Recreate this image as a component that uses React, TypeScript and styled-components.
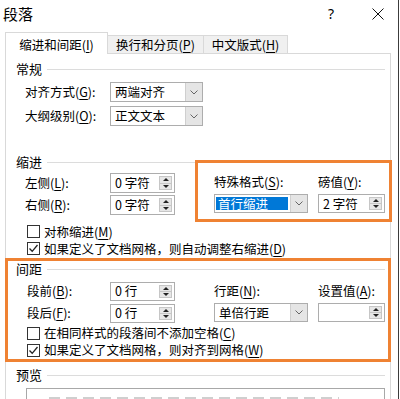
import React from "react";
import styled, { createGlobalStyle } from "styled-components";

const Global = createGlobalStyle`
  html, body { margin: 0; padding: 0; background: #fff; }
  body {
    font-family: "Noto Sans CJK SC", "Noto Sans", sans-serif;
    font-size: 12.5px;
    color: #000;
  }
  * { box-sizing: border-box; }
`;

const ORANGE = "#ef8233";
const FS = "12.5px";

const Window = styled.div`
  width: 399px;
  height: 399px;
  border-right: 1px solid #3c3c3c;
  background: #fff;
  display: flex;
  flex-direction: column;
  overflow: hidden;
`;

const TitleBar = styled.div`
  height: 28px;
  flex-shrink: 0;
  display: flex;
  align-items: center;
  padding-left: 3px;
`;

const Title = styled.div`
  flex: 1;
  font-size: 15px;
  line-height: 18px;
`;

const HelpButton = styled.div`
  width: 12px;
  font-family: "Noto Sans", sans-serif;
  font-size: 14px;
  line-height: 16px;
  text-align: center;
`;

const CloseButton = styled.div`
  width: 12px;
  height: 12px;
  margin-left: 35px;
  margin-right: 14px;
  display: flex;
`;

const TabStrip = styled.div`
  margin-top: 4px;
  height: 21px;
  flex-shrink: 0;
  display: flex;
  align-items: flex-end;
  padding-left: 5px;
  position: relative;
  z-index: 1;
`;

const Tab = styled.div<{ $active?: boolean; $w: number }>`
  width: ${(p) => p.$w}px;
  height: ${(p) => (p.$active ? 22 : 18)}px;
  margin-bottom: ${(p) => (p.$active ? -1 : 0)}px;
  background: ${(p) => (p.$active ? "#fff" : "#f0f0f0")};
  border: 1px solid #d9d9d9;
  border-bottom: none;
  border-left-width: ${(p) => (p.$active ? 1 : 0)}px;
  display: flex;
  align-items: center;
  justify-content: center;
  padding-top: ${(p) => (p.$active ? 2 : 0)}px;
  font-size: ${FS};
  line-height: 16px;
  white-space: nowrap;
`;

const Panel = styled.div`
  flex: 1;
  margin-left: 5px;
  width: 386px;
  border: 1px solid #d9d9d9;
  border-bottom: none;
  background: #fff;
  display: flex;
  flex-direction: column;
`;

const GroupHeader = styled.div<{ $pl: number; $pr: number; $mt?: number }>`
  height: 16px;
  margin-top: ${(p) => p.$mt ?? 0}px;
  display: flex;
  align-items: center;
  padding-left: ${(p) => p.$pl}px;
  padding-right: ${(p) => p.$pr}px;
  font-size: 13px;
  line-height: 16px;
`;

const GroupLine = styled.div`
  flex: 1;
  height: 1px;
  background: #dcdcdc;
  margin-left: 5px;
`;

const FieldRow = styled.div<{ $mt?: number; $lw: number }>`
  height: 20px;
  margin-top: ${(p) => p.$mt ?? 0}px;
  display: flex;
  align-items: center;
  padding-left: 19px;
  & > span:first-child {
    width: ${(p) => p.$lw}px;
    flex-shrink: 0;
  }
`;

const Label = styled.span`
  font-size: ${FS};
  line-height: 16px;
  white-space: nowrap;
`;

const Key = styled.span`
  text-decoration: underline;
  text-underline-offset: 2px;
`;

const SelectBox = styled.div<{ $w: number; $h?: number }>`
  width: ${(p) => p.$w}px;
  height: ${(p) => p.$h ?? 20}px;
  border: 1px solid #adadad;
  background: #fff;
  display: flex;
  flex-shrink: 0;
`;

const SelectValue = styled.div<{ $hl?: boolean }>`
  flex: 1;
  margin: ${(p) => (p.$hl ? "2px 2px 2px 1px" : "0")};
  padding-left: ${(p) => (p.$hl ? 2 : 4)}px;
  background: ${(p) => (p.$hl ? "#0078d7" : "transparent")};
  color: ${(p) => (p.$hl ? "#fff" : "#000")};
  display: flex;
  align-items: center;
  font-size: ${FS};
  line-height: 14px;
  white-space: nowrap;
`;

const DropButton = styled.div`
  width: 17px;
  background: #e5e5e5;
  border-left: 1px solid #cfcfcf;
  display: flex;
  align-items: center;
  justify-content: center;
`;

const SpinBox = styled.div<{ $w: number; $h?: number }>`
  width: ${(p) => p.$w}px;
  height: ${(p) => p.$h ?? 20}px;
  border: 1px solid #adadad;
  background: #fff;
  display: flex;
  flex-shrink: 0;
`;

const SpinValue = styled.div`
  flex: 1;
  padding-left: 4px;
  display: flex;
  align-items: center;
  font-size: ${FS};
  line-height: 16px;
  white-space: nowrap;
`;

const SpinButton = styled.div`
  width: 13px;
  margin: 2px 2px 2px 0;
  background: #e6e6e6;
  border: 1px solid #c6c6c6;
  display: flex;
  flex-direction: column;
`;

const SpinHalf = styled.div<{ $down?: boolean }>`
  flex: 1;
  display: flex;
  align-items: center;
  justify-content: center;
  border-top: ${(p) => (p.$down ? "1px solid #c6c6c6" : "none")};
  &::after {
    content: "";
    width: 0;
    height: 0;
    border-left: 3px solid transparent;
    border-right: 3px solid transparent;
    ${(p) =>
      p.$down ? "border-top: 3px solid #222;" : "border-bottom: 3px solid #222;"}
  }
`;

const IndentSection = styled.div`
  margin-top: 28px;
  display: flex;
  align-items: flex-start;
`;

const IndentLeft = styled.div`
  width: 189px;
  flex-shrink: 0;
  display: flex;
  flex-direction: column;
`;

const HighlightBox = styled.div`
  margin-top: 6px;
  width: 197px;
  height: 62px;
  flex-shrink: 0;
  border: 3px solid ${ORANGE};
  display: flex;
  gap: 10px;
  padding: 11px 0 0 16px;
`;

const StackField = styled.div`
  display: flex;
  flex-direction: column;
`;

const StackLabel = styled.div<{ $h: number }>`
  height: ${(p) => p.$h}px;
  display: flex;
  align-items: center;
  font-size: ${FS};
  line-height: 16px;
  white-space: nowrap;
`;

const StackGap = styled.div<{ $h: number }>`
  height: ${(p) => p.$h}px;
`;

const CheckRow = styled.div<{ $mt?: number; $h: number; $pl: number }>`
  height: ${(p) => p.$h}px;
  margin-top: ${(p) => p.$mt ?? 0}px;
  padding-left: ${(p) => p.$pl}px;
  display: flex;
  align-items: center;
  gap: 4px;
  font-size: ${FS};
  line-height: 16px;
  white-space: nowrap;
`;

const CheckBox = styled.div`
  width: 13px;
  height: 13px;
  border: 1px solid #333;
  background: #fff;
  flex-shrink: 0;
  display: flex;
`;

const SpacingBox = styled.div`
  margin: 1px -1px 0 -1px;
  height: 104px;
  flex-shrink: 0;
  border: 3px solid ${ORANGE};
  display: flex;
  flex-direction: column;
`;

const SpacingGrid = styled.div`
  margin-top: 4px;
  display: flex;
`;

const SpacingLeft = styled.div`
  width: 206px;
  flex-shrink: 0;
  display: flex;
  flex-direction: column;
`;

const SpacingRight = styled.div`
  display: flex;
  gap: 10px;
`;

const PreviewBox = styled.div`
  margin: 5px 0 0 20px;
  width: 359px;
  height: 40px;
  flex-shrink: 0;
  border: 1px solid #a8a8a8;
  border-bottom: none;
  padding: 8px 0 0 22px;
`;

const PreviewText = styled.div`
  width: 290px;
  height: 2px;
  background: repeating-linear-gradient(
    to right,
    #cfcfcf 0 11px,
    transparent 11px 17px
  );
`;

const Chevron = () => (
  <svg width="8" height="5" viewBox="0 0 8 5">
    <polyline points="0.5,0.5 4,4 7.5,0.5" fill="none" stroke="#666" strokeWidth="1" />
  </svg>
);

const CheckMark = () => (
  <svg width="11" height="11" viewBox="0 0 11 11">
    <polyline points="1.5,5.5 4.2,8.3 9.5,2" fill="none" stroke="#222" strokeWidth="1.3" />
  </svg>
);

const Select: React.FC<{ w: number; h?: number; value: string; hl?: boolean }> = ({ w, h, value, hl }) => (
  <SelectBox $w={w} $h={h}>
    <SelectValue $hl={hl}>{value}</SelectValue>
    <DropButton>
      <Chevron />
    </DropButton>
  </SelectBox>
);

const Spin: React.FC<{ w: number; h?: number; value: string }> = ({ w, h, value }) => (
  <SpinBox $w={w} $h={h}>
    <SpinValue>{value}</SpinValue>
    <SpinButton>
      <SpinHalf />
      <SpinHalf $down />
    </SpinButton>
  </SpinBox>
);

const Check: React.FC<{ checked?: boolean; mt?: number; h: number; pl: number; children: React.ReactNode }> = ({
  checked,
  mt,
  h,
  pl,
  children,
}) => (
  <CheckRow $mt={mt} $h={h} $pl={pl}>
    <CheckBox>{checked && <CheckMark />}</CheckBox>
    <span>{children}</span>
  </CheckRow>
);

export default function App() {
  return (
    <>
      <Global />
      <Window>
        <TitleBar>
          <Title>段落</Title>
          <HelpButton>?</HelpButton>
          <CloseButton>
            <svg width="12" height="12" viewBox="0 0 12 12">
              <line x1="0.5" y1="0.5" x2="11.5" y2="11.5" stroke="#111" strokeWidth="1" />
              <line x1="11.5" y1="0.5" x2="0.5" y2="11.5" stroke="#111" strokeWidth="1" />
            </svg>
          </CloseButton>
        </TitleBar>

        <TabStrip>
          <Tab $active $w={103}>
            缩进和间距(<Key>I</Key>)
          </Tab>
          <Tab $w={96}>
            换行和分页(<Key>P</Key>)
          </Tab>
          <Tab $w={84}>
            中文版式(<Key>H</Key>)
          </Tab>
        </TabStrip>

        <Panel>
          <GroupHeader $pl={10} $pr={5} $mt={7}>
            常规
            <GroupLine />
          </GroupHeader>
          <FieldRow $mt={5} $lw={85}>
            <Label>
              对齐方式(<Key>G</Key>):
            </Label>
            <Select w={93} value="两端对齐" />
          </FieldRow>
          <FieldRow $mt={4} $lw={85}>
            <Label>
              大纲级别(<Key>O</Key>):
            </Label>
            <Select w={93} value="正文文本" />
          </FieldRow>

          <IndentSection>
            <IndentLeft>
              <GroupHeader $pl={10} $pr={0}>
                缩进
                <GroupLine />
              </GroupHeader>
              <FieldRow $mt={3} $lw={85}>
                <Label>
                  左侧(<Key>L</Key>):
                </Label>
                <Spin w={65} value="0 字符" />
              </FieldRow>
              <FieldRow $mt={2} $lw={85}>
                <Label>
                  右侧(<Key>R</Key>):
                </Label>
                <Spin w={65} value="0 字符" />
              </FieldRow>
            </IndentLeft>
            <HighlightBox>
              <StackField>
                <StackLabel $h={16}>
                  特殊格式(<Key>S</Key>):
                </StackLabel>
                <StackGap $h={4} />
                <Select w={94} h={19} value="首行缩进" hl />
              </StackField>
              <StackField>
                <StackLabel $h={16}>
                  磅值(<Key>Y</Key>):
                </StackLabel>
                <StackGap $h={4} />
                <Spin w={67} h={19} value="2 字符" />
              </StackField>
            </HighlightBox>
          </IndentSection>

          <Check mt={1} h={17} pl={21}>
            对称缩进(<Key>M</Key>)
          </Check>
          <Check checked h={17} pl={21}>
            如果定义了文档网格，则自动调整右缩进(<Key>D</Key>)
          </Check>

          <SpacingBox>
            <GroupHeader $pl={8} $pr={3}>
              间距
              <GroupLine />
            </GroupHeader>
            <SpacingGrid>
              <SpacingLeft>
                <FieldRow $lw={83}>
                  <Label>
                    段前(<Key>B</Key>):
                  </Label>
                  <Spin w={65} h={19} value="0 行" />
                </FieldRow>
                <FieldRow $mt={2} $lw={83}>
                  <Label>
                    段后(<Key>F</Key>):
                  </Label>
                  <Spin w={65} h={19} value="0 行" />
                </FieldRow>
              </SpacingLeft>
              <SpacingRight>
                <StackField>
                  <StackLabel $h={20}>
                    行距(<Key>N</Key>):
                  </StackLabel>
                  <StackGap $h={2} />
                  <Select w={94} h={19} value="单倍行距" />
                </StackField>
                <StackField>
                  <StackLabel $h={20}>
                    设置值(<Key>A</Key>):
                  </StackLabel>
                  <StackGap $h={2} />
                  <Spin w={67} h={19} value="" />
                </StackField>
              </SpacingRight>
            </SpacingGrid>
            <Check mt={2} h={18} pl={19}>
              在相同样式的段落间不添加空格(<Key>C</Key>)
            </Check>
            <Check checked h={19} pl={19}>
              如果定义了文档网格，则对齐到网格(<Key>W</Key>)
            </Check>
          </SpacingBox>

          <GroupHeader $pl={10} $pr={5} $mt={5}>
            预览
            <GroupLine />
          </GroupHeader>
          <PreviewBox>
            <PreviewText />
          </PreviewBox>
        </Panel>
      </Window>
    </>
  );
}
